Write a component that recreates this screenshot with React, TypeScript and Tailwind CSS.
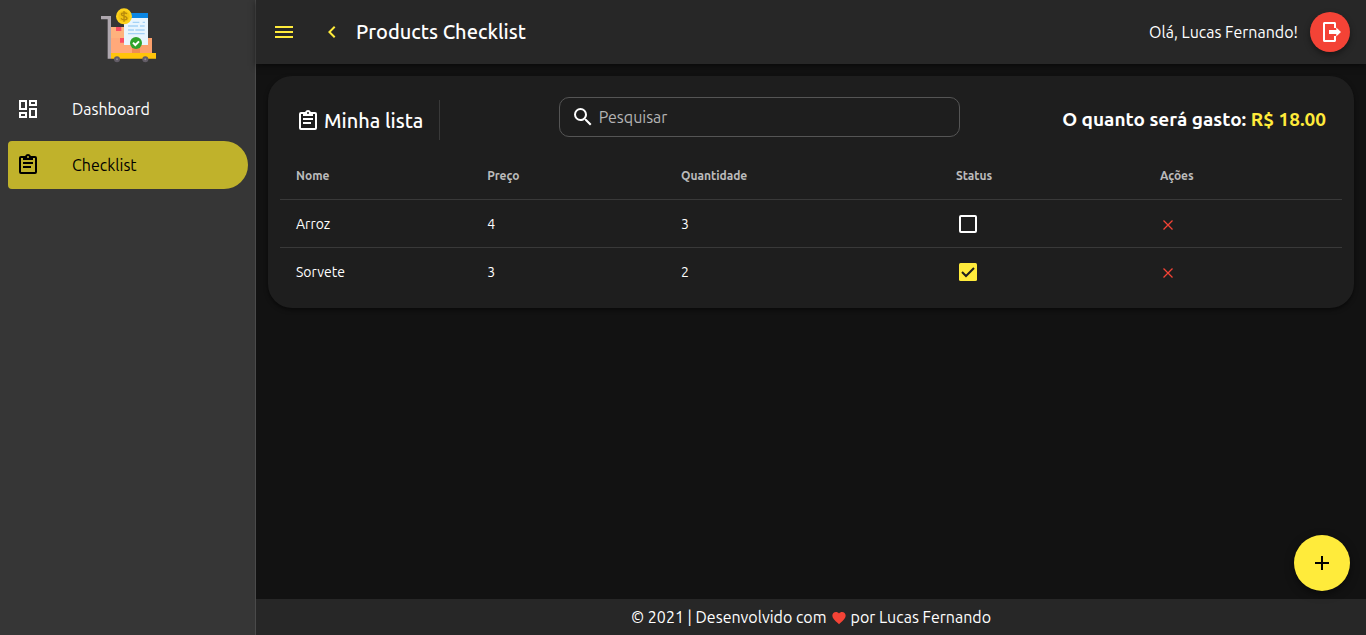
import { useState } from "react";

type IconProps = { d: string; className?: string };

function Icon({ d, className = "size-6" }: IconProps) {
  return (
    <svg viewBox="0 0 24 24" fill="currentColor" aria-hidden="true" className={`shrink-0 ${className}`}>
      <path d={d} />
    </svg>
  );
}

const icons = {
  dashboard:
    "M19,5V7H15V5H19M9,5V11H5V5H9M19,13V19H15V13H19M9,17V19H5V17H9M21,3H13V9H21V3M11,3H3V13H11V3M21,11H13V21H21V11M11,15H3V21H11V15Z",
  clipboard:
    "M19,3H14.82C14.4,1.84 13.3,1 12,1C10.7,1 9.6,1.84 9.18,3H5A2,2 0 0,0 3,5V19A2,2 0 0,0 5,21H19A2,2 0 0,0 21,19V5A2,2 0 0,0 19,3M12,3A1,1 0 0,1 13,4A1,1 0 0,1 12,5A1,1 0 0,1 11,4A1,1 0 0,1 12,3M7,7H17V5H19V19H5V5H7V7M17,11H7V9H17V11M15,15H7V13H15V15Z",
  menu: "M3,6H21V8H3V6M3,11H21V13H3V11M3,16H21V18H3V16Z",
  back: "M15.41,16.58L10.83,12L15.41,7.41L14,6L8,12L14,18L15.41,16.58Z",
  logout:
    "M18.3,16.5V14H11V10H18.3V7.5L23,12L18.3,16.5M16.5,2C17.3,2 18,2.7 18,3.5V8H16V4H7V20H16V16H18V20.5C18,21.3 17.3,22 16.5,22H6.5C5.7,22 5,21.3 5,20.5V3.5C5,2.7 5.7,2 6.5,2H16.5Z",
  search:
    "M9.5,3A6.5,6.5 0 0,1 16,9.5C16,11.11 15.41,12.59 14.44,13.73L14.71,14H15.5L20.5,19L19,20.5L14,15.5V14.71L13.73,14.44C12.59,15.41 11.11,16 9.5,16A6.5,6.5 0 0,1 3,9.5A6.5,6.5 0 0,1 9.5,3M9.5,5C7,5 5,7 5,9.5C5,12 7,14 9.5,14C12,14 14,12 14,9.5C14,7 12,5 9.5,5Z",
  heart:
    "M12,21.35L10.55,20.03C5.4,15.36 2,12.27 2,8.5C2,5.41 4.42,3 7.5,3C9.24,3 10.91,3.81 12,5.08C13.09,3.81 14.76,3 16.5,3C19.58,3 22,5.41 22,8.5C22,12.27 18.6,15.36 13.45,20.03L12,21.35Z",
  plus: "M19,13H13V19H11V13H5V11H11V5H13V11H19V13Z",
};

function Logo() {
  return (
    <svg viewBox="0 6 180 168" className="h-14 w-15" role="img" aria-label="Products Checklist">
      <path d="M39 63h45v34H39z" fill="#ffb27d" />
      <path d="M39 96h76v46H39z" fill="#ffa97a" />
      <path d="M114 96h48v46h-48z" fill="#fba06c" />
      <path d="M102 124h24v18h-24z" fill="#ef8d55" />
      <path d="M54 63h16v12H54zM66 96h14v14H66z" fill="#fc4e63" />
      <path d="M78 24h72v93H78z" fill="#e8f5fe" />
      <path d="M86 21h64v15H86z" fill="#0a86e4" />
      <path
        d="M104 49h20M134 49h7M90 60h30M126 60h14M90 72h18M112 72h28M90 83h50"
        stroke="#a4d2f6"
        strokeWidth="4"
      />
      <path d="M9 35h25v123" fill="none" stroke="#aea7ae" strokeWidth="10" />
      <path d="M39 141h135v17H39z" fill="#ffc40a" />
      <circle cx="57" cy="160" r="9" fill="#625c66" />
      <circle cx="142" cy="160" r="9" fill="#625c66" />
      <circle cx="57" cy="160" r="3" fill="#8c8790" />
      <circle cx="142" cy="160" r="3" fill="#8c8790" />
      <circle cx="78" cy="31" r="24" fill="#fdd21c" />
      <circle cx="78" cy="31" r="17" fill="#f3c411" />
      <path
        d="M87 24c-3-5-17-5-17 1 0 7 17 4 17 12 0 6-14 6-18 0M78 15v32"
        fill="none"
        stroke="#b88a0c"
        strokeWidth="4"
      />
      <circle cx="114" cy="111" r="18" fill="#2ea32b" />
      <path d="m105 110 7 7 11-11" fill="none" stroke="#fff" strokeWidth="6" />
    </svg>
  );
}

function Sidebar() {
  return (
    <aside className="flex w-64 shrink-0 flex-col border-r border-[#4a4a4a] bg-[#363636]">
      <div className="flex justify-center pt-2">
        <Logo />
      </div>
      <nav className="flex flex-col gap-2 pt-[21px] pr-[7px] pl-2">
        <a href="#dashboard" className="flex h-12 items-center gap-8 rounded-l rounded-r-3xl px-2 text-white">
          <Icon d={icons.dashboard} />
          Dashboard
        </a>
        <a
          href="#checklist"
          aria-current="page"
          className="flex h-12 items-center gap-8 rounded-l rounded-r-3xl bg-[#c0b22b] px-2 text-black"
        >
          <Icon d={icons.clipboard} />
          Checklist
        </a>
      </nav>
    </aside>
  );
}

function Header() {
  return (
    <header className="flex h-16 shrink-0 items-center bg-[#272727] px-4 text-white shadow-[0_2px_6px_rgba(0,0,0,0.5)]">
      <button type="button" aria-label="Menu" className="text-[#ffeb3b]">
        <Icon d={icons.menu} />
      </button>
      <button type="button" aria-label="Voltar" className="ml-6 text-[#ffeb3b]">
        <Icon d={icons.back} />
      </button>
      <h1 className="ml-3 text-xl font-medium">Products Checklist</h1>
      <span className="ml-auto">Olá, Lucas Fernando!</span>
      <button
        type="button"
        aria-label="Sair"
        className="ml-3 flex size-10 items-center justify-center rounded-full bg-[#f44336] shadow-[0_3px_6px_rgba(0,0,0,0.4)]"
      >
        <Icon d={icons.logout} />
      </button>
    </header>
  );
}

type Product = { name: string; price: number; amount: number; done: boolean };

const initial: Product[] = [
  { name: "Arroz", price: 4, amount: 3, done: false },
  { name: "Sorvete", price: 3, amount: 2, done: true },
];

function ProductTable() {
  const [products, setProducts] = useState(initial);
  const toggle = (name: string) =>
    setProducts(products.map((p) => (p.name === name ? { ...p, done: !p.done } : p)));
  return (
    <table className="w-full table-fixed border-separate border-spacing-0 text-left">
      <colgroup>
        <col className="w-[18%]" />
        <col className="w-[18.25%]" />
        <col className="w-[25.9%]" />
        <col className="w-[19.2%]" />
        <col />
      </colgroup>
      <thead className="text-xs text-[#bbbbbb]">
        <tr className="*:h-12 *:border-b *:border-[#393939] *:px-4">
          <th>Nome</th>
          <th>Preço</th>
          <th>Quantidade</th>
          <th>Status</th>
          <th>Ações</th>
        </tr>
      </thead>
      <tbody className="text-sm text-white">
        {products.map((p) => (
          <tr key={p.name} className="*:h-12 *:border-[#393939] *:px-4 not-last:*:border-b">
            <td>{p.name}</td>
            <td>{p.price}</td>
            <td>{p.amount}</td>
            <td>
              <label className="flex size-6 items-center justify-center">
                <input
                  type="checkbox"
                  aria-label={p.name}
                  checked={p.done}
                  onChange={() => toggle(p.name)}
                  className="peer size-[18px] appearance-none rounded-xs border-2 border-white checked:hidden"
                />
                <svg viewBox="0 0 18 18" className="hidden size-[18px] peer-checked:block" aria-hidden="true">
                  <rect width="18" height="18" rx="1.5" fill="#ffeb3b" />
                  <path d="m3 9 4 4 8-8" fill="none" stroke="#1e1e1e" strokeWidth="2" />
                </svg>
              </label>
            </td>
            <td>
              <button
                type="button"
                aria-label={`Remover ${p.name}`}
                className="mt-0.5 flex size-4 items-center justify-center text-[#f44336]"
              >
                <svg viewBox="0 0 10 10" className="size-[10px]" aria-hidden="true">
                  <path d="m.5.5 9 9m0-9-9 9" fill="none" stroke="currentColor" strokeWidth="1.3" />
                </svg>
              </button>
            </td>
          </tr>
        ))}
      </tbody>
    </table>
  );
}

export default function App() {
  return (
    <div className="flex min-h-screen bg-[#121212] font-[Ubuntu,'Noto_Sans',sans-serif] text-base">
      <Sidebar />
      <div className="flex min-w-0 grow flex-col">
        <Header />
        <main className="grow p-3">
          <section className="rounded-3xl bg-[#1e1e1e] p-3 text-white shadow-[0_2px_4px_rgba(0,0,0,0.5)]">
            <div className="flex h-16 items-center justify-between px-4">
              <h2 className="mr-4 flex h-10 items-center gap-1 border-r border-[#393939] pt-0.5 pr-4 text-xl font-medium">
                <Icon d={icons.clipboard} />
                Minha lista
              </h2>
              <label className="mb-1.5 flex h-10 w-full max-w-[401px] items-center gap-1 rounded-[10px] border border-[#555555] px-[11px]">
                <Icon d={icons.search} />
                <input
                  type="search"
                  aria-label="Pesquisar"
                  placeholder="Pesquisar"
                  className="min-w-0 grow bg-transparent outline-none placeholder:text-[#b4b4b4]"
                />
              </label>
              <p className="mb-0.5 text-[19px] font-bold">
                O quanto será gasto: <span className="text-[#ffeb3b]">R$ 18.00</span>
              </p>
            </div>
            <ProductTable />
          </section>
        </main>
        <footer className="flex h-9 shrink-0 items-center justify-center gap-1 bg-[#272727] text-white">
          © 2021 | Desenvolvido com
          <Icon d={icons.heart} className="mt-0.5 size-4 text-[#f44336]" />
          por Lucas Fernando
        </footer>
      </div>
      <button
        type="button"
        aria-label="Adicionar produto"
        className="fixed right-4 bottom-11 flex size-14 items-center justify-center rounded-full bg-[#ffeb3b] text-black shadow-[0_3px_8px_rgba(0,0,0,0.5)]"
      >
        <Icon d={icons.plus} />
      </button>
    </div>
  );
}
